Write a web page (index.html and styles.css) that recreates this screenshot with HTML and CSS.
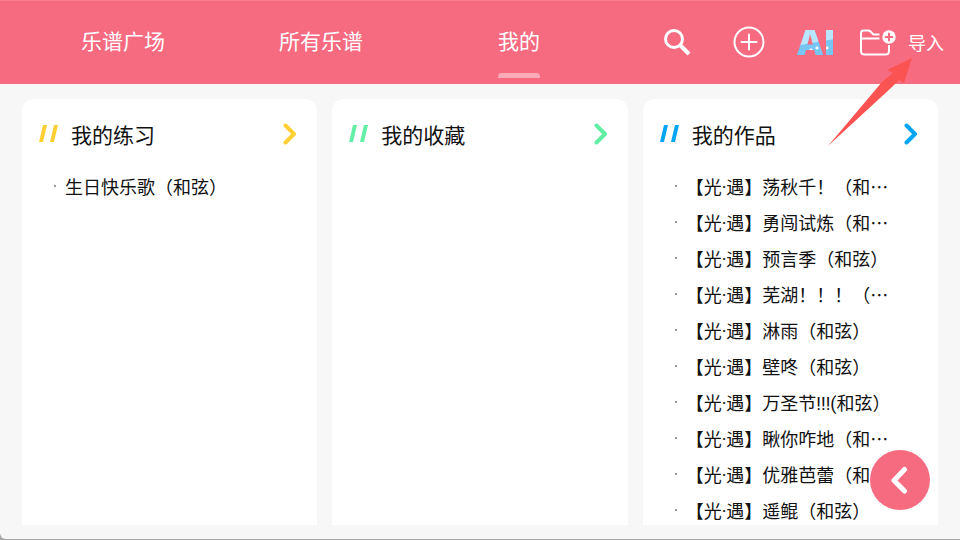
FILE: index.html
```html
<!DOCTYPE html>
<html lang="zh-CN">

<head>
  <meta charset="UTF-8">
  <meta name="viewport" content="width=device-width, initial-scale=1.0">
  <title>我的</title>
  <link rel="stylesheet" href="styles.css">
</head>

<body>

  <div class="app">
    <header class="topbar">
      <nav class="tabs">
        <a class="tab" href="#">乐谱广场</a>
        <a class="tab" href="#">所有乐谱</a>
        <a class="tab active" href="#">我的</a>
      </nav>
      <div class="tools">
        <button class="tool search" type="button" aria-label="搜索">
          <svg width="28" height="28" viewBox="0 0 28 28" fill="none" stroke="#fff">
            <circle cx="11" cy="11" r="8.5" stroke-width="3" />
            <path d="M17 17L26 26" stroke-width="4" />
          </svg>
        </button>
        <button class="tool add" type="button" aria-label="新建">
          <svg width="32" height="32" viewBox="0 0 32 32" fill="none" stroke="#fff" stroke-width="2">
            <circle cx="16" cy="16" r="14.5" />
            <path d="M16 8.5V23.5M8.5 16H23.5" stroke-linecap="round" />
          </svg>
        </button>
        <button class="tool ai" type="button">AI</button>
        <button class="tool import" type="button">
          <svg width="38" height="28" viewBox="0 0 38 28" fill="none" stroke="#fff" stroke-width="2">
            <path d="M20.5 6.5H14.5L11.5 3.5Q10.5 2.5 9 2.5H4.5Q2 2.5 2 5V23Q2 26.5 5.5 26.5H26.5Q30 26.5 30 23V17" />
            <path d="M2 10.5H20.5" />
            <circle cx="30" cy="9" r="6.7" fill="#fff" stroke="none" />
            <path d="M30 4.8V13.2M25.8 9H34.2" stroke="#f76b81" />
          </svg>
          <span>导入</span>
        </button>
      </div>
    </header>

    <main class="cards">
      <section class="card yellow">
        <a class="card-head" href="#">
          <svg class="mark" width="20" height="18" viewBox="0 0 20 18">
            <path d="M4 0H8L4 17H0ZM15 0H19L15 17H11Z" />
          </svg>
          <h2>我的练习</h2>
          <svg class="more" width="14" height="22" viewBox="0 0 14 22">
            <path d="M2.5 2.5L11 11L2.5 19.5" />
          </svg>
        </a>
        <ul class="songs">
          <li><a href="#">生日快乐歌（和弦）</a></li>
        </ul>
      </section>

      <section class="card green">
        <a class="card-head" href="#">
          <svg class="mark" width="20" height="18" viewBox="0 0 20 18">
            <path d="M4 0H8L4 17H0ZM15 0H19L15 17H11Z" />
          </svg>
          <h2>我的收藏</h2>
          <svg class="more" width="14" height="22" viewBox="0 0 14 22">
            <path d="M2.5 2.5L11 11L2.5 19.5" />
          </svg>
        </a>
      </section>

      <section class="card blue">
        <a class="card-head" href="#">
          <svg class="mark" width="20" height="18" viewBox="0 0 20 18">
            <path d="M4 0H8L4 17H0ZM15 0H19L15 17H11Z" />
          </svg>
          <h2>我的作品</h2>
          <svg class="more" width="14" height="22" viewBox="0 0 14 22">
            <path d="M2.5 2.5L11 11L2.5 19.5" />
          </svg>
        </a>
        <ul class="songs">
          <li><a href="#">【光<span class="latin">·</span>遇】荡秋千！（和弦）</a></li>
          <li><a href="#">【光<span class="latin">·</span>遇】勇闯试炼（和弦）</a></li>
          <li><a href="#">【光<span class="latin">·</span>遇】预言季（和弦）</a></li>
          <li><a href="#">【光<span class="latin">·</span>遇】芜湖！！！（和弦）</a></li>
          <li><a href="#">【光<span class="latin">·</span>遇】淋雨（和弦）</a></li>
          <li><a href="#">【光<span class="latin">·</span>遇】壁咚（和弦）</a></li>
          <li><a href="#">【光<span class="latin">·</span>遇】万圣节<span class="latin">!!!(</span>和弦）</a></li>
          <li><a href="#">【光<span class="latin">·</span>遇】瞅你咋地（和弦）</a></li>
          <li><a href="#">【光<span class="latin">·</span>遇】优雅芭蕾（和弦）</a></li>
          <li><a href="#">【光<span class="latin">·</span>遇】遥鲲（和弦）</a></li>
        </ul>
      </section>
    </main>

    <!-- floating back button -->
    <button class="back" type="button" aria-label="返回">
      <svg width="20" height="28" viewBox="0 0 20 28" fill="none" stroke="#fff" stroke-width="5" stroke-linecap="round" stroke-linejoin="round">
        <path d="M14.5 3.5L4 14.5L14.5 25" />
      </svg>
    </button>

    <!-- pointer to the import button -->
    <svg class="arrow" width="85" height="88" viewBox="0 0 85 88" fill="#fb5351">
      <path d="M0 88L54 24L65 15L59 12L84 0L76 25L71 22L64 29Z" />
    </svg>
  </div>

</body>

</html>
```
FILE: styles.css
```css
* {
  box-sizing: border-box;
}

body {
  margin: 0;
  background: #aaa;
  font-family: "Noto Sans CJK SC", sans-serif;
  color: #111;
}

a {
  color: inherit;
  text-decoration: none;
}

button {
  padding: 0;
  border: none;
  background: none;
  color: white;
  font-family: inherit;
  cursor: pointer;
}

svg {
  display: block;
  flex: none;
}

.app {
  position: relative;
  display: flex;
  flex-direction: column;
  height: calc(100vh - 1px);
  background: #f7f7f7;
  border-bottom-left-radius: 6px;
  overflow: hidden;
}

/* top bar */
.topbar {
  display: flex;
  height: 84px;
  flex: none;
  padding: 0 16px 0 24px;
  background: #f76b81;
  border-top: 1px solid #fa7f92;
  color: white;
}

.tabs {
  display: flex;
  flex: 1;
}

.tab {
  position: relative;
  flex: 1;
  display: flex;
  align-items: center;
  justify-content: center;
  padding-bottom: 5px;
  font-size: 21px;
}

.tab.active::after {
  content: "";
  position: absolute;
  bottom: 6px;
  width: 42px;
  height: 5px;
  background: #fbaab7;
  border-radius: 4px 4px 0 0;
}

.tools {
  display: flex;
  align-items: center;
  padding: 0 0 2px 45px;
}

.add {
  margin-left: 42px;
}

.ai {
  width: 36px;
  margin: 0 26px 0 32px;
  font-family: "Open Sans", Arial, sans-serif;
  font-size: 36px;
  font-weight: 800;
  line-height: 40px;
  color: transparent;
  background: radial-gradient(circle at 14px 28px, #fff 1px, transparent 2px),
    radial-gradient(circle at 20px 26px, #fff 1px, transparent 2px),
    radial-gradient(circle at 30px 26px, #fff 1px, transparent 2px),
    linear-gradient(170deg, #b8e6ff 50%, #76c6f5 52%);
  -webkit-background-clip: text;
  background-clip: text;
}

.import {
  display: flex;
  align-items: center;
  gap: 11px;
  font-size: 18px;
}

/* cards */
.cards {
  flex: 1;
  min-height: 0;
  display: grid;
  grid-template-columns: repeat(3, 1fr);
  gap: 15px;
  padding: 15px 22px 14px;
}

.card {
  background: white;
  border-radius: 12px 12px 0 0;
  overflow: hidden;
}

.yellow {
  --accent: #ffd034;
}

.green {
  --accent: #62efa5;
}

.blue {
  --accent: #06a4f5;
}

.card-head {
  display: flex;
  align-items: center;
  height: 69px;
  padding: 0 20px 0 17px;
}

.mark {
  fill: var(--accent);
}

.card-head h2 {
  flex: 1;
  margin: 0 0 0 12px;
  font-size: 21px;
  font-weight: normal;
}

.more {
  fill: none;
  stroke: var(--accent);
  stroke-width: 4;
  stroke-linecap: round;
  stroke-linejoin: round;
}

.songs {
  margin: 0;
  padding: 0 44px 0 32px;
  list-style: none;
}

.songs li {
  display: flex;
  align-items: center;
  gap: 9px;
  height: 36px;
  font-size: 18px;
}

.songs li::before {
  content: "";
  flex: none;
  width: 2px;
  height: 2px;
  background: #999;
}

.songs a {
  overflow: hidden;
  white-space: nowrap;
  text-overflow: ellipsis;
}

.latin {
  font-family: Roboto, sans-serif;
}

/* things that float over the page */
.back {
  position: absolute;
  right: 30px;
  bottom: 29px;
  display: flex;
  align-items: center;
  justify-content: center;
  width: 60px;
  height: 60px;
  border-radius: 50%;
  background: #f76b81;
}

.arrow {
  position: absolute;
  top: 58px;
  right: 47px;
  pointer-events: none;
}
```
